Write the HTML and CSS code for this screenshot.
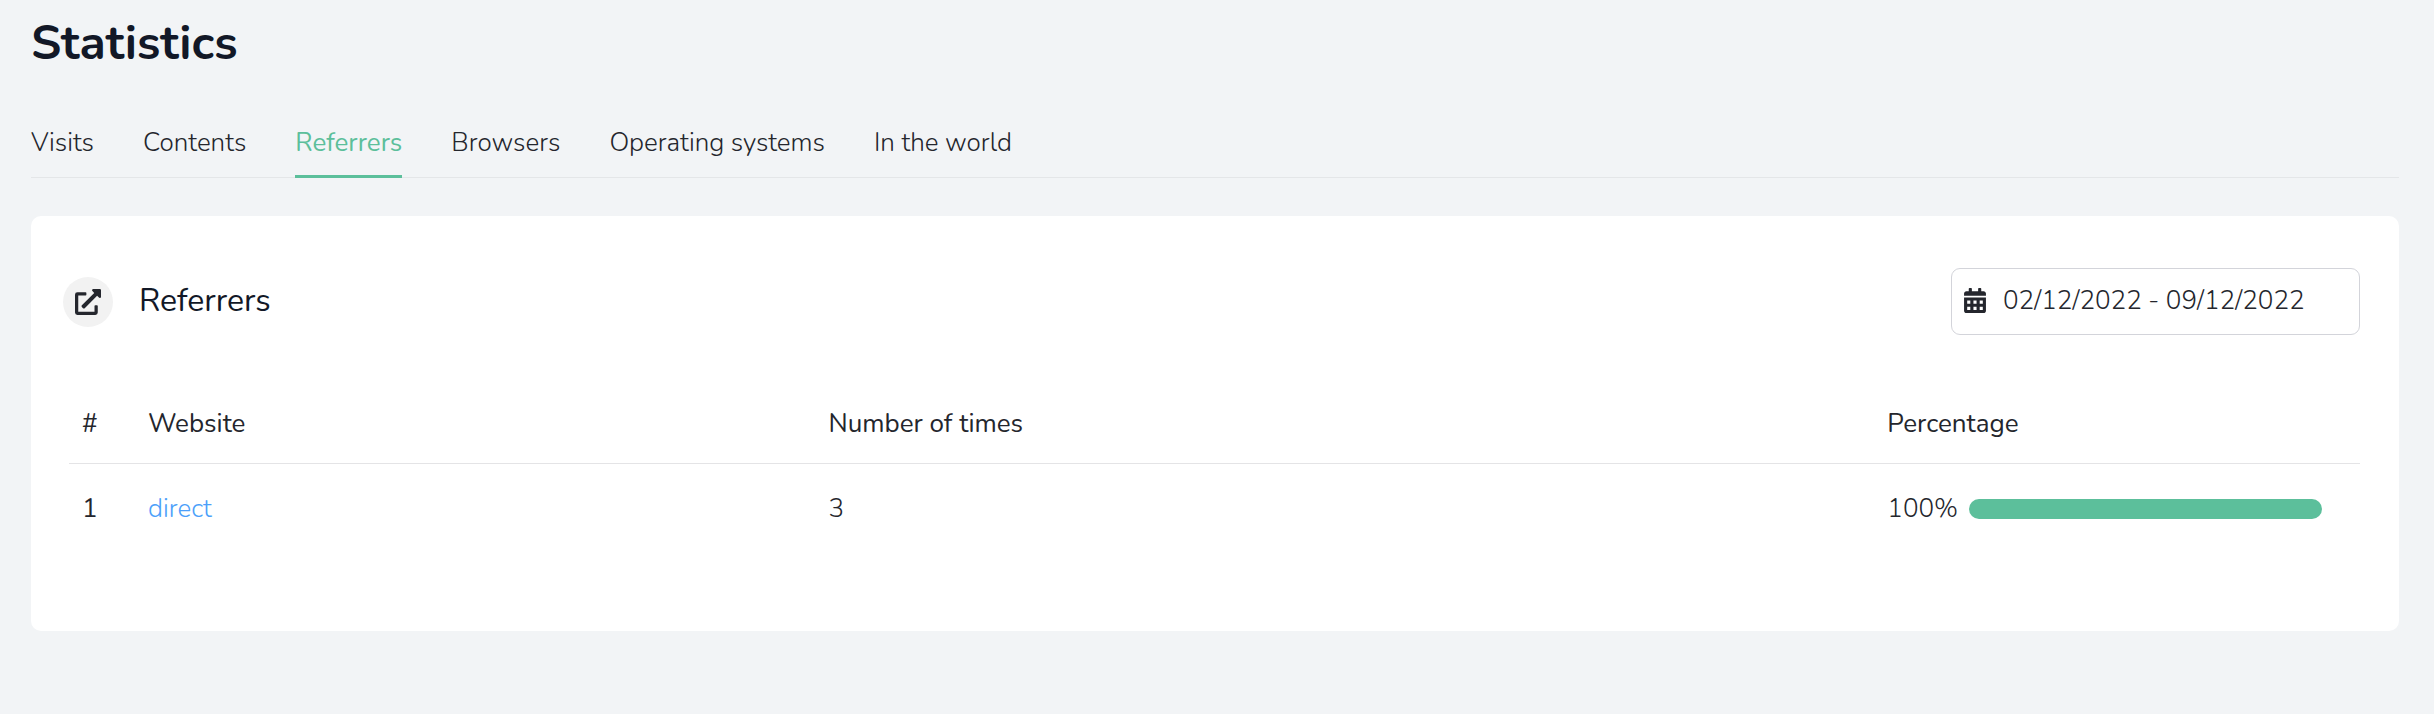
FILE: index.html
```html
<!DOCTYPE html>
<html lang="en">
<head>
    <meta charset="UTF-8">
    <meta name="viewport" content="width=device-width, initial-scale=1.0">
    <title>Statistics</title>
    <link rel="stylesheet" href="styles.css">
</head>
<body>

    <main class="page">
        <h1>Statistics</h1>

        <nav class="tabs">
            <a href="#visits">Visits</a>
            <a href="#contents">Contents</a>
            <a href="#referrers" class="active" aria-current="page">Referrers</a>
            <a href="#browsers">Browsers</a>
            <a href="#systems">Operating systems</a>
            <a href="#world">In the world</a>
        </nav>

        <section class="card" id="referrers">
            <div class="card-header">
                <span class="card-icon">
                    <svg viewBox="0 0 512 512" aria-hidden="true"><path d="M432,320H400a16,16,0,0,0-16,16V448H64V128H208a16,16,0,0,0,16-16V80a16,16,0,0,0-16-16H48A48,48,0,0,0,0,112V464a48,48,0,0,0,48,48H400a48,48,0,0,0,48-48V336A16,16,0,0,0,432,320ZM488,0h-128c-21.37,0-32.05,25.91-17,41l35.73,35.73L135,320.37a24,24,0,0,0,0,34L157.67,377a24,24,0,0,0,34,0L435.28,133.32,471,169c15,15,41,4.5,41-17V24A24,24,0,0,0,488,0Z"/></svg>
                </span>
                <h2>Referrers</h2>
                <label class="date-range" for="dateRange">
                    <svg viewBox="0 0 448 512" aria-hidden="true"><path fill-rule="evenodd" d="M0 464c0 26.500 21.500 48 48 48h352c26.500 0 48-21.500 48-48V192H0zM64 256h64v64H64zM192 256h64v64h-64zM320 256h64v64h-64zM64 384h64v64H64zM192 384h64v64h-64zM320 384h64v64h-64zM400 64h-48V16c0-9-7-16-16-16h-32c-9 0-16 7-16 16v48H160V16c0-9-7-16-16-16h-32c-9 0-16 7-16 16v48H48C21.500 64 0 85.500 0 112v48h448v-48c0-26.500-21.500-48-48-48z"/></svg>
                    <input type="text" id="dateRange" name="dateRange" value="02/12/2022 - 09/12/2022" aria-label="Date range">
                </label>
            </div>

            <table class="stats-table">
                <thead>
                    <tr>
                        <th class="col-rank" scope="col">#</th>
                        <th class="col-website" scope="col">Website</th>
                        <th class="col-times" scope="col">Number of times</th>
                        <th class="col-percent" scope="col">Percentage</th>
                    </tr>
                </thead>
                <tbody>
                    <tr>
                        <th scope="row">1</th>
                        <td><a href="#direct">direct</a></td>
                        <td>3</td>
                        <td>
                            <div class="percent">
                                <span class="percent-value">100%</span>
                                <div class="bar"><div class="bar-fill" style="width: 100%"></div></div>
                            </div>
                        </td>
                    </tr>
                </tbody>
            </table>
        </section>
    </main>

</body>
</html>
```
FILE: styles.css
```css
* {
    box-sizing: border-box;
}

body {
    font-family: Nunito, Lato, sans-serif;
    font-size: 26px;
    font-weight: 300;
    line-height: 40px;
    background-color: #f2f4f6;
    color: #24262d;
    margin: 0;
}

.page {
    padding: 13px 35px 82px 31px;
}

h1 {
    font-size: 48px;
    font-weight: 700;
    line-height: 60px;
    color: #121827;
    margin: 0 0 50px;
}

.tabs {
    display: flex;
    gap: 49px;
    border-bottom: 1px solid #e4e6e8;
    margin-bottom: 38px;
}

.tabs a {
    padding-bottom: 12px;
    margin-bottom: -1px;
    border-bottom: 3px solid transparent;
    color: inherit;
    text-decoration: none;
}

.tabs a.active {
    color: #5cbf9b;
    border-bottom-color: #5cbf9b;
    font-weight: 400;
}

.card {
    background-color: #fff;
    border-radius: 10px;
    padding: 52px 39px 88px 38px;
}

.card-header {
    display: flex;
    align-items: center;
    margin: 0 0 48px -6px;
}

.card-icon {
    display: flex;
    align-items: center;
    justify-content: center;
    width: 50px;
    height: 50px;
    border-radius: 50%;
    background-color: #f2f2f2;
}

.card-icon svg {
    width: 26px;
    height: 26px;
    fill: #24262d;
}

h2 {
    font-size: 32px;
    font-weight: 400;
    color: #121827;
    margin: 0 auto 0 26px;
    padding-bottom: 2px;
}

.date-range {
    display: flex;
    align-items: center;
    gap: 17px;
    width: 409px;
    height: 67px;
    padding: 0 12px 2px;
    border: 1px solid #d3d4da;
    border-radius: 9px;
}

.date-range svg {
    flex: none;
    width: 22px;
    height: 25px;
    fill: #24262d;
}

.date-range input {
    flex: 1;
    min-width: 0;
    padding: 0;
    border: none;
    outline: none;
    background: none;
    color: inherit;
    font: inherit;
}

.stats-table {
    width: 100%;
    table-layout: fixed;
    border-collapse: collapse;
}

.stats-table th,
.stats-table td {
    padding: 21px 13px 19px;
    text-align: left;
}

.stats-table th {
    font-weight: 400;
}

.stats-table thead th {
    border-bottom: 1px solid #e4e4e6;
}

.stats-table tbody th,
.stats-table tbody td {
    padding: 25px 13px 14px;
}

.stats-table a {
    color: #4c9ffa;
    text-decoration: none;
}

.col-rank {
    width: 66px;
}

.col-website {
    width: 29.7%;
}

.col-percent {
    width: 21.2%;
}

.percent {
    display: flex;
    align-items: center;
    justify-content: space-between;
    padding-right: 25px;
}

.bar {
    width: 353px;
    height: 20px;
    border-radius: 10px;
    overflow: hidden;
}

.bar-fill {
    height: 100%;
    background-color: #5cbf9b;
}
```
